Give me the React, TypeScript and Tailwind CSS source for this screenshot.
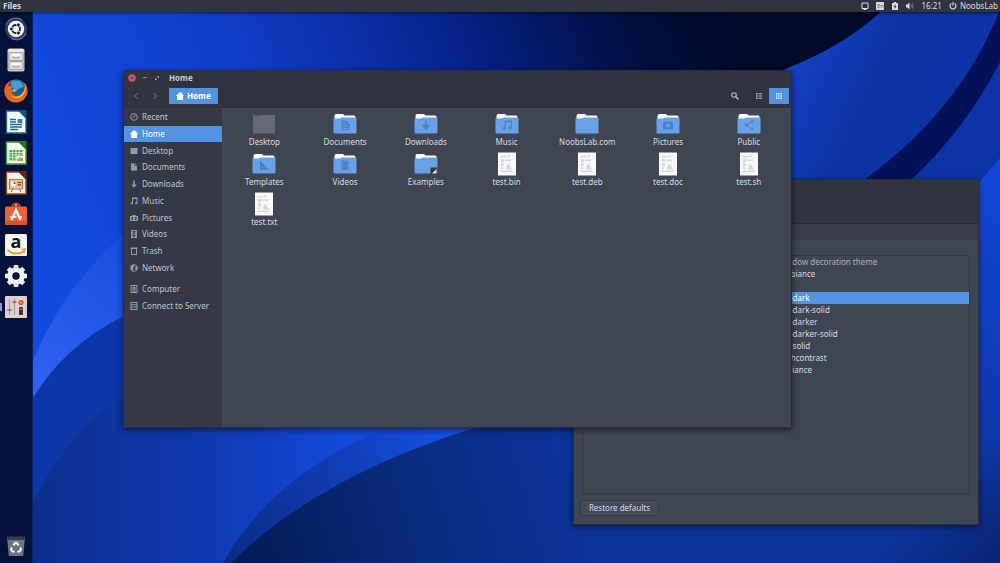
import { useState, type ReactNode } from "react";
import clsx from "clsx";

type Emblem =
  | "document"
  | "download"
  | "music"
  | "picture"
  | "share"
  | "ruler"
  | "film"
  | "link";

interface FileItem {
  name: string;
  kind: "desktop" | "folder" | "text";
  emblem?: Emblem;
}

interface Place {
  name: string;
  icon: ReactNode;
}

const files: FileItem[] = [
  { name: "Desktop", kind: "desktop" },
  { name: "Documents", kind: "folder", emblem: "document" },
  { name: "Downloads", kind: "folder", emblem: "download" },
  { name: "Music", kind: "folder", emblem: "music" },
  { name: "NoobsLab.com", kind: "folder" },
  { name: "Pictures", kind: "folder", emblem: "picture" },
  { name: "Public", kind: "folder", emblem: "share" },
  { name: "Templates", kind: "folder", emblem: "ruler" },
  { name: "Videos", kind: "folder", emblem: "film" },
  { name: "Examples", kind: "folder", emblem: "link" },
  { name: "test.bin", kind: "text" },
  { name: "test.deb", kind: "text" },
  { name: "test.doc", kind: "text" },
  { name: "test.sh", kind: "text" },
  { name: "test.txt", kind: "text" },
];

const themes = [
  "Ambiance",
  "Arc",
  "Arc-dark",
  "Arc-dark-solid",
  "Arc-darker",
  "Arc-darker-solid",
  "Arc-solid",
  "Highcontrast",
  "Radiance",
];

const HomeGlyph = () => (
  <svg viewBox="0 0 16 16" className="size-2 shrink-0" fill="currentColor">
    <path d="M8 0L0 8h2v8h12V8h2L12.500 4.500V1.500h-2v1z" />
  </svg>
);

const places: Place[] = [
  {
    name: "Recent",
    icon: (
      <>
        <circle cx="8" cy="8" r="6.700" fill="none" stroke="currentColor" strokeWidth="2" />
        <path d="M8 8.500L11 4.500M8 8.500H5.500" fill="none" stroke="currentColor" strokeWidth="1.800" />
      </>
    ),
  },
  { name: "Home", icon: <path d="M8 0L0 8h2v8h12V8h2L12.500 4.500V1.500h-2v1z" /> },
  { name: "Desktop", icon: <path d="M1 2h14v12H1z" /> },
  { name: "Documents", icon: <path d="M2 1h7v5h5v9H2zM10.500 1L14 4.500h-3.500z" /> },
  { name: "Downloads", icon: <path d="M6.500 1h3v8h4L8 15.500 2.500 9h4z" /> },
  {
    name: "Music",
    icon: (
      <path d="M4 1h11v11.500a2.500 2 0 1 1-2-2V4H6v9a2.500 2 0 1 1-2-2z" />
    ),
  },
  {
    name: "Pictures",
    icon: (
      <path
        fillRule="evenodd"
        d="M5 2h6l1 2h4v10H0V4h4zM3 6v6h10V6zM8 6.200a2.800 2.800 0 1 1 0 5.600 2.800 2.800 0 0 1 0-5.600z"
      />
    ),
  },
  {
    name: "Videos",
    icon: (
      <path
        fillRule="evenodd"
        d="M2 0h12v16H2zM3.500 2v2H5V2zm0 4v2H5V6zm0 4v2H5v-2zM11 2v2h1.500V2zm0 4v2h1.500V6zm0 4v2h1.500v-2zM6.300 1.500v5.500h3.400V1.500zm0 7.500v5.500h3.400V9z"
      />
    ),
  },
  {
    name: "Trash",
    icon: (
      <path fillRule="evenodd" d="M1 1h14v2.500h-1V16H2V3.500H1zM4 4v10h8V4z" />
    ),
  },
  {
    name: "Network",
    icon: (
      <>
        <circle cx="8" cy="8" r="6.800" fill="none" stroke="currentColor" strokeWidth="1.800" />
        <path d="M2 3.500L6 1.500l3 1-1 3.500-3 1 2 3-1 4.500L2.500 11zM10.500 6l4-1 .5 4-3 4-1.500-3z" />
      </>
    ),
  },
];

const devices: Place[] = [
  {
    name: "Computer",
    icon: (
      <>
        <path fillRule="evenodd" d="M1 0h14v16H1zM3 2v12h10V2z" />
        <path
          fillRule="evenodd"
          d="M8 3a3.500 3.500 0 1 1 0 7 3.500 3.500 0 0 1 0-7zm0 2.500a1 1 0 1 0 0 2 1 1 0 0 0 0-2zM4 11h8v2H4z"
        />
      </>
    ),
  },
  {
    name: "Connect to Server",
    icon: (
      <path
        fillRule="evenodd"
        d="M1 0h14v16H1zM3 2v2.500h10V2zM3 6.500V9h10V6.500zM3 11v3h10v-3z"
      />
    ),
  },
];

const launcher: { name: string; art: ReactNode; running?: boolean }[] = [
  {
    name: "Search your computer",
    art: (
      <>
        <circle cx="12" cy="12" r="11" fill="#3c4563" opacity=".75" />
        <path d="M2 8C5 1 12-1 18 3M22 16c-3 7-10 8-15 5" stroke="#9aa3b8" strokeWidth="1.500" fill="none" opacity=".5" />
        <circle cx="12" cy="12" r="8.200" fill="#f2f3f5" />
        <circle cx="12" cy="12" r="4" fill="none" stroke="#151b2c" strokeWidth="1.800" />
        <g fill="#151b2c" stroke="#f2f3f5" strokeWidth=".8">
          <circle cx="7.400" cy="12" r="1.900" />
          <circle cx="14.400" cy="8" r="1.900" />
          <circle cx="14.400" cy="16" r="1.900" />
        </g>
      </>
    ),
  },
  {
    name: "Files",
    art: (
      <>
        <rect x="3.500" y=".5" width="17" height="23" rx="2" fill="#c9cac8" />
        <rect x="4.500" y="1" width="15" height="3" rx="1" fill="#ececea" />
        <rect x="5" y="4.500" width="14" height="8" rx="1" fill="#e2e2e0" stroke="#969692" strokeWidth=".8" />
        <rect x="5" y="13.500" width="14" height="8" rx="1" fill="#dcdcda" stroke="#969692" strokeWidth=".8" />
        <path d="M8 6h8v2H8zM8 15h8v2H8z" fill="#fafafa" />
        <path d="M9 8.500v1.500h6V8.500M9 17.500V19h6v-1.500" stroke="#a0a09b" fill="none" />
      </>
    ),
  },
  {
    name: "Firefox",
    art: (
      <>
        <circle cx="12" cy="12" r="11.500" fill="#e8601c" />
        <circle cx="12.500" cy="10" r="9.300" fill="#1b5c9e" />
        <path d="M7 3c5-3 11-1 13 4-3 3-6 2-7 4-3 0-6-3-6-8z" fill="#3da0d8" />
        <path d="M20.500 4c3 4 3.500 9 1 13-3 6-12 8-18 3C-1 15 0 8 3 4c0 2 .5 3 1.500 3.500C6 6.500 7.500 7 9 7.500 8 8.500 7 9.500 8 11c-1 4 3 7 7 6 5-1 6.500-7 5.500-13z" fill="#e9621b" />
        <path d="M20.500 4c2.500 5 1.500 10-2.500 13-3 3-9 3-11-1 3 3 8 2 10.500-1C21 12 21.500 8 20.500 4z" fill="#f9b233" />
        <path d="M8 11c1-1 3-1 5-.500-1 2-2.500 2.500-4 2.500z" fill="#f6a04a" />
      </>
    ),
  },
  {
    name: "LibreOffice Writer",
    art: (
      <>
        <path d="M2.500 1h13L22 8v15H2.500z" fill="#f4f8fa" stroke="#1c6a94" strokeWidth="1.400" />
        <path d="M13.500 0H22.500v9z" fill="#0f5482" />
        <path d="M6 9.500h6M6 12h6M6 14.500h12M6 17h12M6 19.500h8" stroke="#1f6c98" strokeWidth="1.300" />
        <path d="M13.500 9h5v4h-5z" fill="#3c7fa8" />
      </>
    ),
  },
  {
    name: "LibreOffice Calc",
    art: (
      <>
        <path d="M2.500 1h13L22 8v15H2.500z" fill="#f5faf3" stroke="#37a52b" strokeWidth="1.400" />
        <path d="M13.500 0H22.500v9z" fill="#187a14" />
        <path d="M5.500 9h13v10.500h-13z" fill="#4aa83c" />
        <path d="M5.500 11.500h13M5.500 14h13M5.500 16.700h13M8.700 9v10.500M12 9v10.500M15.200 9v10.500" stroke="#eef8ea" strokeWidth=".8" />
        <path d="M12.500 15h7v6h-7z" fill="#f5faf3" />
        <path d="M14 20v-2.500M16 20v-4" stroke="#d25c2a" strokeWidth="1.300" />
        <path d="M18 20v-3" stroke="#2b7b22" strokeWidth="1.300" />
      </>
    ),
  },
  {
    name: "LibreOffice Impress",
    art: (
      <>
        <path d="M2.500 1h13L22 8v15H2.500z" fill="#faf4f0" stroke="#9c4718" strokeWidth="1.400" />
        <path d="M13.500 0H22.500v9z" fill="#642709" />
        <path d="M5.500 8.500h13v9.500h-13z" fill="#e3c6ab" stroke="#b57a52" strokeWidth="1.200" />
        <circle cx="9.500" cy="13" r="2.400" fill="#fff" />
        <path d="M9.500 10.600a2.400 2.400 0 0 1 2.400 2.400H9.500z" fill="#3d9a4b" />
        <path d="M13.500 11.500h4M13.500 14h3.500" stroke="#c8381f" strokeWidth="1.300" />
        <path d="M9 18l-2 3M15 18l2 3" stroke="#a5582b" />
      </>
    ),
  },
  {
    name: "Ubuntu Software",
    art: (
      <>
        <path d="M8 6c0-6 8-6 8 0" fill="none" stroke="#c14a22" strokeWidth="2" />
        <path d="M1 6q0-1.500 1.500-1.500h19Q23 4.500 23 6v15.500q0 1.500-1.500 1.500h-19Q1 23 1 21.500z" fill="#ea6236" />
        <path d="M1 19h22v2.500q0 1.500-1.500 1.500h-19Q1 23 1 21.500z" fill="#d9522a" />
        <path d="M7.500 18L12 8l4.500 10" fill="none" stroke="#fff" strokeWidth="2.200" />
        <path d="M6 15h6.500M15 15h3" stroke="#fff" strokeWidth="1.600" />
        <circle cx="12" cy="3.500" r="1.400" fill="#f08a64" />
      </>
    ),
  },
  {
    name: "Amazon",
    art: (
      <>
        <rect x="1" y="1" width="22" height="22" rx="1.500" fill="#f6f6f6" />
        <text x="12" y="15" textAnchor="middle" fontSize="18" fontWeight="700" fill="#15181d">
          a
        </text>
        <path d="M3.500 17c5 4.500 12 4.500 16.500 1" fill="none" stroke="#f0a02c" strokeWidth="1.800" />
        <path d="M17.500 16.500l4-.5-1.500 4" fill="none" stroke="#f0a02c" strokeWidth="1.300" />
      </>
    ),
  },
  {
    name: "System Settings",
    art: (
      <>
        <g stroke="#eef0f2" strokeWidth="4.500">
          <path d="M12 1v22M1 12h22M4.300 4.300l15.400 15.400M19.700 4.300L4.300 19.700" />
        </g>
        <circle cx="12" cy="12" r="8.800" fill="#eef0f2" />
        <circle cx="12" cy="12" r="3.700" fill="#04113a" />
      </>
    ),
  },
  {
    name: "Unity Tweak Tool",
    running: true,
    art: (
      <>
        <rect x="1" y="1" width="22" height="22" rx="1" fill="#dfcfcd" />
        <path d="M5.500 4v16M10.500 4v16" stroke="#a99c9a" strokeWidth="1.200" />
        <path d="M3.500 15h4M8.500 7h4" stroke="#8a7d7b" strokeWidth="1.800" />
        <circle cx="17" cy="7.500" r="2.600" fill="#d9532a" />
        <circle cx="17" cy="7.500" r="1" fill="#f3a37e" />
        <rect x="15" y="12" width="4" height="8" rx=".6" fill="#3a3838" />
        <path d="M15.500 14h3" stroke="#a29b9a" />
      </>
    ),
  },
];

const emblems: Record<Emblem, ReactNode> = {
  document: (
    <path
      fillRule="evenodd"
      d="M8.500 8.500H13l3.500 3V18h-8zM10 10.500V12h2v-1.500zm0 3V14.500h5v-1zm0 2.500v1h5v-1z"
    />
  ),
  download: <path d="M11.200 8.500h1.600v4h3.700L12.500 18h-1L7.500 12.500h3.700z" />,
  music: <path d="M9.500 8.500h7.500v7.300a1.700 1.500 0 1 1-1.200-1.400v-4h-5v6a1.700 1.500 0 1 1-1.300-1.400z" />,
  picture: (
    <path
      fillRule="evenodd"
      d="M8 9.500h8q1 0 1 1v6q0 1-1 1H8q-1 0-1-1v-6q0-1 1-1zM12 11.500a2 2 0 1 0 0 4 2 2 0 0 0 0-4z"
    />
  ),
  share: (
    <>
      <path d="M15 9.700l-5.500 3.500L15 16.800" fill="none" stroke="currentColor" strokeWidth="1" />
      <circle cx="15" cy="9.700" r="1.400" />
      <circle cx="9.500" cy="13.200" r="1.600" />
      <circle cx="15" cy="16.800" r="1.400" />
    </>
  ),
  ruler: <path fillRule="evenodd" d="M8 8.500l9 9.500H8zM10 14.500v1.500h1.500z" />,
  film: (
    <path
      fillRule="evenodd"
      d="M8.500 8.500h7V18h-7zM9.300 9.500v1h1v-1zm0 2.500v1h1v-1zm0 2.500v1h1v-1zm4.400-5v1h1v-1zm0 2.500v1h1v-1zm0 2.500v1h1v-1z"
    />
  ),
  link: null,
};

const FileArt = ({ item }: { item: FileItem }) => {
  if (item.kind === "text") {
    return (
      <svg viewBox="0 0 24 24" className="size-6">
        <path d="M3 .5h18v23H3z" fill="#f7f7f7" />
        <g fill="#d6d9db">
          <path d="M6 4h5v1.500H6zM12 3.500h3V5h-3zM6 7h3v3H6zM10 7.500h6V9h-6zM6 11h3v3H6zM6 15h2v2H6zM12 12.500h2l3 5h-6z" />
          <path d="M5.500 18.500h12V20h-12z" />
        </g>
      </svg>
    );
  }
  if (item.kind === "desktop") {
    return (
      <svg viewBox="0 0 24 24" className="size-6">
        <path d="M1 3h22v18.500H1z" fill="#666a74" />
        <path d="M2 3.500h7v1H2z" fill="#4b505b" />
      </svg>
    );
  }
  return (
    <svg viewBox="0 0 24 24" className="size-6 text-[#4c82c8]" fill="currentColor">
      <path d="M3.500 2H10L11.500 3.500H21q1.500 0 1.500 1.500V10h-21V4q0-2 2-2z" fill="#fff" />
      <path d="M.5 6.500H7l2-1h14.500v15q0 1-1 1h-21q-1 0-1-1z" fill="#68a1e6" />
      {item.emblem && emblems[item.emblem]}
      {item.emblem === "link" && (
        <>
          <path d="M16.500 15.500h7v7h-7z" fill="#333842" />
          <path d="M22.500 17v4.500H18z" fill="#f4f5f7" />
        </>
      )}
    </svg>
  );
};

const Wallpaper = () => (
  <svg
    viewBox="0 0 1000 563"
    preserveAspectRatio="none"
    className="absolute inset-0 size-full"
    aria-hidden="true"
  >
    <defs>
      <linearGradient id="sky" gradientUnits="userSpaceOnUse" x1="60" y1="260" x2="740" y2="20">
        <stop offset="0" stopColor="#134be0" />
        <stop offset=".3" stopColor="#1040cc" />
        <stop offset=".62" stopColor="#07238a" />
        <stop offset=".85" stopColor="#020e40" />
        <stop offset="1" stopColor="#010a28" />
      </linearGradient>
      <linearGradient id="right" gradientUnits="userSpaceOnUse" x1="800" y1="60" x2="960" y2="130">
        <stop offset="0" stopColor="#123fc4" />
        <stop offset=".45" stopColor="#0c339f" />
        <stop offset="1" stopColor="#0c34a8" />
      </linearGradient>
      <linearGradient id="corner" gradientUnits="userSpaceOnUse" x1="985" y1="180" x2="985" y2="524">
        <stop offset="0" stopColor="#1147d6" />
        <stop offset=".6" stopColor="#0e3bb4" />
        <stop offset="1" stopColor="#0c339a" />
      </linearGradient>
      <linearGradient id="blade" gradientUnits="userSpaceOnUse" x1="33" y1="380" x2="123" y2="260">
        <stop offset="0" stopColor="#2c62f2" />
        <stop offset="1" stopColor="#1b50e0" />
      </linearGradient>
      <linearGradient id="slope" gradientUnits="userSpaceOnUse" x1="33" y1="0" x2="350" y2="0">
        <stop offset="0" stopColor="#0b2f8e" />
        <stop offset=".5" stopColor="#0f38ac" />
        <stop offset="1" stopColor="#134bdc" />
      </linearGradient>
      <linearGradient id="fin" gradientUnits="userSpaceOnUse" x1="230" y1="563" x2="430" y2="430">
        <stop offset="0" stopColor="#0a2c86" />
        <stop offset=".5" stopColor="#1039aa" />
        <stop offset="1" stopColor="#154ee2" />
      </linearGradient>
      <linearGradient id="floor" gradientUnits="userSpaceOnUse" x1="250" y1="563" x2="570" y2="470">
        <stop offset="0" stopColor="#061c58" />
        <stop offset=".5" stopColor="#0a2a7c" />
        <stop offset="1" stopColor="#0c339a" />
      </linearGradient>
      <linearGradient id="fade" gradientUnits="userSpaceOnUse" x1="935" y1="498" x2="1000" y2="563">
        <stop offset="0" stopColor="#0a2472" stopOpacity="0" />
        <stop offset="1" stopColor="#0a2472" />
      </linearGradient>
    </defs>
    <path d="M0 0h1000v563H0z" fill="url(#sky)" />
    <path d="M1000 0H893Q850 45 780 71L600 200v363h400z" fill="url(#right)" />
    <path d="M1000 12V62Q965 130 911 180H864Q960 110 999 12z" fill="#031258" />
    <path d="M33 360Q65 285 124 234V320Q65 345 33 398z" fill="url(#blade)" />
    <path d="M33 398Q65 345 124 316H700V563H33z" fill="#0d37a8" />
    <path d="M33 502Q70 430 124 394H600V563H33z" fill="url(#slope)" />
    <path d="M223 563Q275 470 395 425L480 428L232 563z" fill="url(#fin)" />
    <path d="M231 563Q320 475 478 427H1000V563z" fill="url(#floor)" />
    <path d="M1000 158L976 186v338h24z" fill="url(#corner)" />
    <path d="M1000 433L870 563h130z" fill="url(#fade)" />
  </svg>
);

const TopPanel = () => (
  <header className="relative z-20 flex h-3 items-center justify-between bg-[#2f343f] pr-0.5 pl-[3px] text-[#d8dce6] shadow-[0_1px_3px_rgba(0,0,0,0.6)]">
    <span className="font-bold">Files</span>
    <div className="flex items-center gap-[7px]">
      <svg viewBox="0 0 16 16" className="size-2" fill="none" stroke="currentColor" strokeWidth="2">
        <path d="M2 2h12v11H2z" />
        <path d="M5 15h6" />
      </svg>
      <span className="flex size-2 items-center justify-center rounded-[1px] bg-[#d8dce6] text-[6px] text-[#5b606c]">
        En
      </span>
      <svg viewBox="0 0 16 16" className="size-2" fill="currentColor">
        <path fillRule="evenodd" d="M6 0h4v2h4v14H2V2h4zM9 4L5 9.500h2.500V14L11 8.500H8.500z" />
      </svg>
      <svg viewBox="0 0 16 16" className="size-2" fill="currentColor">
        <path d="M0 5h3l4-4v14l-4-4H0z" />
        <path d="M9.500 4.500q2.500 3.500 0 7M12.500 2.500q3.500 5.500 0 11" fill="none" stroke="currentColor" strokeWidth="1.300" opacity=".6" />
      </svg>
      <span>16:21</span>
      <button type="button" className="flex items-center gap-[3px]">
        <svg viewBox="0 0 16 16" className="size-2" fill="none" stroke="currentColor" strokeWidth="2.200">
          <path d="M4.500 3a6 6 0 1 0 7 0M8 0v7.500" />
        </svg>
        NoobsLab
      </button>
    </div>
  </header>
);

const Launcher = () => (
  <nav
    aria-label="Launcher"
    className="relative z-10 flex w-[33px] shrink-0 flex-col justify-between border-r border-[#0b226b] bg-[#04113a] pt-0.5 pb-1"
  >
    <ul className="grid h-[308px] grid-rows-10">
      {launcher.map((app) => (
        <li key={app.name} className="flex items-center justify-center">
          {app.running && (
            <span className="absolute left-0 h-2 w-0.5 bg-[#8f9bc0]" />
          )}
          <button type="button" aria-label={app.name}>
            <svg viewBox="0 0 24 24" className="size-6 overflow-visible">
              {app.art}
            </svg>
          </button>
        </li>
      ))}
    </ul>
    <button type="button" aria-label="Trash" className="self-center">
      <svg viewBox="0 0 24 24" className="size-6">
        <path d="M3 2h18l-1.800 19H4.800z" fill="#6b7280" />
        <path d="M3 1.500h18L20.500 5h-17z" fill="#363d4c" />
        <g fill="none" stroke="#f4f6f8" strokeWidth="2">
          <path d="M9.500 10.500l1.700-2.800h1.600l1.700 2.800M16 12.500l1 1.800-1.300 2.200h-2.400M10.700 16.500H8.300L7 14.300l1-1.800" />
        </g>
      </svg>
    </button>
  </nav>
);

const PlaceRow = ({
  place,
  active,
  onSelect,
}: {
  place: Place;
  active: boolean;
  onSelect: (name: string) => void;
}) => (
  <li className="flex">
    <button
      type="button"
      onClick={() => onSelect(place.name)}
      className={clsx(
        "flex w-full items-center gap-1 pl-1.5",
        active ? "bg-[#5294e2] text-white" : "text-[#bac3cf]"
      )}
    >
      <svg
        viewBox="0 0 16 16"
        fill="currentColor"
        className={clsx("size-2 shrink-0", !active && "text-[#959ba8]")}
      >
        {place.icon}
      </svg>
      {place.name}
    </button>
  </li>
);

const FilesWindow = () => {
  const [current, setCurrent] = useState("Home");
  const [view, setView] = useState<"list" | "grid">("grid");

  return (
    <section
      aria-label="Files"
      className="absolute top-[58px] left-[90px] z-10 flex min-h-[358px] w-[69.2%] flex-col rounded-t-sm border border-[#2b2e39] bg-[#404552] shadow-[0_2px_6px_rgba(0,0,0,0.55)]"
    >
      <header className="rounded-t-sm border-b border-[#2b2e39] bg-[#2f343f] pb-px">
        <div className="flex h-3.5 items-center gap-1.5 pl-1">
          <button type="button" aria-label="Close">
            <svg viewBox="0 0 16 16" className="size-2">
              <circle cx="8" cy="8" r="7.500" fill="#cc575d" />
              <path d="M5.500 5.500l5 5M10.500 5.500l-5 5" stroke="#6d3a44" strokeWidth="2" />
            </svg>
          </button>
          <button type="button" aria-label="Minimize">
            <svg viewBox="0 0 16 16" className="size-1.5" stroke="#a9b0bd" strokeWidth="2">
              <path d="M3 7h10" />
            </svg>
          </button>
          <button type="button" aria-label="Maximize">
            <svg viewBox="0 0 16 16" className="size-1.5" fill="#a9b0bd">
              <path d="M7 3h6v6zM3 7v6h6z" />
            </svg>
          </button>
          <h1 className="pl-[3px] font-bold text-[#c5cad6]">{current}</h1>
        </div>
        <div className="flex h-[21px] items-center pr-0.5 pl-2 text-[#b6bcc9]">
          <div className="flex gap-[11px] pr-2.5 text-[#737987]">
            <button type="button" aria-label="Back">
              <svg viewBox="0 0 16 16" className="size-2" fill="none" stroke="currentColor" strokeWidth="2">
                <path d="M11 2L5 8l6 6" />
              </svg>
            </button>
            <button type="button" aria-label="Forward">
              <svg viewBox="0 0 16 16" className="size-2" fill="none" stroke="currentColor" strokeWidth="2">
                <path d="M5 2l6 6-6 6" />
              </svg>
            </button>
          </div>
          <button
            type="button"
            className="flex h-4 items-center gap-[3px] rounded-[1px] bg-[#5294e2] px-[7px] font-bold text-white"
          >
            <HomeGlyph />
            Home
          </button>
          <div className="ml-auto flex items-center">
            <button type="button" aria-label="Search" className="mr-1 flex h-4 w-5 items-center justify-center">
              <svg viewBox="0 0 16 16" className="size-2" fill="none" stroke="currentColor" strokeWidth="2.200">
                <circle cx="6" cy="6" r="4.500" />
                <path d="M9 9l6 6" strokeWidth="2.800" />
              </svg>
            </button>
            <button
              type="button"
              aria-label="List view"
              onClick={() => setView("list")}
              className={clsx(
                "flex h-4 w-5 items-center justify-center rounded-[1px]",
                view === "list" && "bg-[#5294e2] text-white"
              )}
            >
              <svg viewBox="0 0 16 16" className="size-2" fill="currentColor">
                <path d="M2 2h3v3H2zM7 2.500h7v2H7zM2 6.500h3v3H2zM7 7h7v2H7zM2 11h3v3H2zM7 11.500h7v2H7z" />
              </svg>
            </button>
            <button
              type="button"
              aria-label="Grid view"
              onClick={() => setView("grid")}
              className={clsx(
                "flex h-4 w-5 items-center justify-center rounded-[1px]",
                view === "grid" && "bg-[#5294e2] text-[#d5e6fa]"
              )}
            >
              <svg viewBox="0 0 16 16" className="size-2" fill="currentColor">
                <path d="M2 2h3v3H2zM6.500 2h3v3h-3zM11 2h3v3h-3zM2 6.500h3v3H2zM6.500 6.500h3v3h-3zM11 6.500h3v3h-3zM2 11h3v3H2zM6.500 11h3v3h-3zM11 11h3v3h-3z" />
              </svg>
            </button>
          </div>
        </div>
      </header>
      <div className="flex flex-1">
        <nav aria-label="Places" className="w-[98px] shrink-0 bg-[#353945] pt-px">
          <ul className="grid h-[167px] grid-rows-10">
            {places.map((place) => (
              <PlaceRow key={place.name} place={place} active={place.name === current} onSelect={setCurrent} />
            ))}
          </ul>
          <ul className="mt-1 grid h-[34px] grid-rows-2">
            {devices.map((place) => (
              <PlaceRow key={place.name} place={place} active={place.name === current} onSelect={setCurrent} />
            ))}
          </ul>
        </nav>
        <main className="flex-1 px-0.5 pt-1">
          <ul className="grid grid-cols-7 gap-y-1">
            {files.map((item) => (
              <li key={item.name} className="flex justify-center">
                <button type="button" className="flex flex-col items-center leading-3 text-[#d3dae3]">
                  <FileArt item={item} />
                  {item.name}
                </button>
              </li>
            ))}
          </ul>
        </main>
      </div>
    </section>
  );
};

const ThemeWindow = () => {
  const [selected, setSelected] = useState("Arc-dark");

  return (
    <section
      aria-label="Theme settings"
      className="absolute top-[167px] right-[21px] flex min-h-[346px] w-[42%] flex-col border border-[#2b2e39] bg-[#404552] shadow-[0_2px_6px_rgba(0,0,0,0.5)]"
    >
      <div className="h-11 border-b border-[#262a33] bg-[#2f343f]" />
      <div className="h-4 bg-[#383c4a]" />
      <div className="mx-2 mt-[15px] flex-1 border border-[#353a46]">
        <table className="w-full border-collapse text-left leading-3">
          <thead>
            <tr>
              <th className="p-0 pl-[195px] font-normal text-[#a9b0bc]">Window decoration theme</th>
            </tr>
          </thead>
          <tbody>
            {themes.map((theme) => (
              <tr
                key={theme}
                onClick={() => setSelected(theme)}
                className={theme === selected ? "bg-[#5294e2] text-white" : "text-[#d3dae3]"}
              >
                <td className="p-0 pl-[195px]">{theme}</td>
              </tr>
            ))}
          </tbody>
        </table>
      </div>
      <button
        type="button"
        className="mt-1.5 mb-2 ml-1.5 h-4 self-start rounded-[1px] border border-[#353a46] bg-[#444a58] px-2 text-[#d3dae3]"
      >
        Restore defaults
      </button>
    </section>
  );
};

export default function App() {
  return (
    <div className="relative flex min-h-screen flex-col overflow-hidden bg-[#0d37a8] font-['Noto_Sans',sans-serif] text-[8px] leading-[10px]">
      <Wallpaper />
      <TopPanel />
      <div className="flex flex-1">
        <Launcher />
        <div className="relative flex-1">
          <FilesWindow />
          <ThemeWindow />
        </div>
      </div>
    </div>
  );
}
